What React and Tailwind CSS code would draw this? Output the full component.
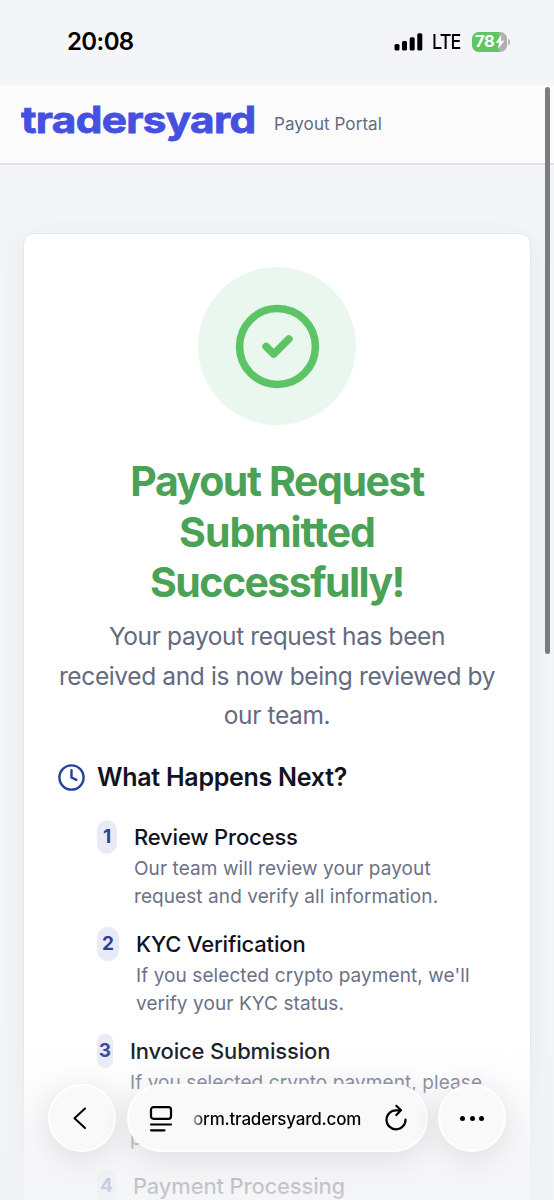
import { CircleCheck, Clock } from "lucide-react";

const steps = [
  {
    id: 1,
    title: "Review Process",
    pill: "w-5",
    lines: ["Our team will review your payout", "request and verify all information."],
  },
  {
    id: 2,
    title: "KYC Verification",
    pill: "w-[22px]",
    lines: ["If you selected crypto payment, we'll", "verify your KYC status."],
  },
  {
    id: 3,
    title: "Invoice Submission",
    pill: "w-4",
    lines: ["If you selected crypto payment, please", "\u00a0", "p"],
  },
  {
    id: 4,
    title: "Payment Processing",
    pill: "w-[19px]",
    lines: [],
  },
];

function StatusBar() {
  return (
    <div className="h-[85px] shrink-0 flex items-start justify-between pl-[67px] pr-[44px] pt-[27px] text-black">
      <span className="text-[24px] leading-[29px] font-semibold tracking-[-0.6px]">20:08</span>
      <div className="flex items-center h-[29px]">
        <svg width="29" height="18" viewBox="0 0 29 18" fill="currentColor">
          <rect x="0.5" y="11" width="5" height="6.5" rx="1.5" />
          <rect x="8" y="8" width="5" height="9.5" rx="1.5" />
          <rect x="15.7" y="4.3" width="5" height="13.2" rx="1.5" />
          <rect x="23.3" y="0.3" width="5" height="17.2" rx="1.5" />
        </svg>
        <span className="ml-[9px] w-[40px] text-[20px] tracking-[-0.9px] font-medium whitespace-nowrap origin-left scale-x-90">LTE</span>
        <div className="relative w-[35px] h-[20px] rounded-[6.5px] overflow-hidden bg-[linear-gradient(90deg,#61c565_78%,#aeb1b0_78%)] flex items-center pl-[3px]">
          <span className="text-[16.5px] font-bold text-white tracking-[-0.3px] leading-none">78</span>
          <svg width="10" height="14" viewBox="0 0 9 13" fill="#fff">
            <path d="M5.8 0 0.4 7.2h3.2L2.6 13 8.6 5.4H5.2z" />
          </svg>
        </div>
        <div className="w-[2px] h-[6px] ml-[1px] rounded-r-full bg-[#b4b6b8]" />
      </div>
    </div>
  );
}

function Header() {
  return (
    <header className="h-[80px] shrink-0 bg-[#fbfbfb] border-b-2 border-[#e1e2e6] flex items-start pl-[21px]">
      <svg width="236" height="60" viewBox="0 0 236 60" className="shrink-0">
        <text x="0" y="48.3" textLength="234.5" lengthAdjust="spacingAndGlyphs" className="text-[37px] font-bold tracking-[-0.6px]" fill="#454fe0" stroke="#454fe0" strokeWidth="0.8">
          tradersyard
        </text>
      </svg>
      <span className="ml-[17px] mt-[27px] text-[17px] leading-6 tracking-[0.08px] text-[#646a7f] whitespace-nowrap">Payout Portal</span>
    </header>
  );
}

function BrowserBar() {
  const glass = "bg-[#f9f9fa] border-2 border-white shadow-[0_6px_30px_rgba(40,45,60,0.12)]";
  return (
    <div className="absolute inset-x-0 bottom-0 h-[116px] flex items-start pl-12 text-black">
      <div className={`w-[68px] h-[68px] rounded-full flex items-center justify-center pr-[4px] ${glass}`}>
        <svg width="14" height="22" viewBox="0 0 14 22" fill="none" stroke="currentColor" strokeWidth="2" strokeLinecap="round" strokeLinejoin="round">
          <path d="M12 1.5 1.5 11.3 12 21" />
        </svg>
      </div>
      <div className={`ml-[11px] w-[301px] h-[68px] rounded-full flex items-center ${glass}`}>
        <svg width="24" height="28" viewBox="0 0 24 28" fill="none" stroke="currentColor" strokeWidth="2.2" strokeLinecap="round" className="ml-5 mt-px shrink-0">
          <rect x="2" y="2.2" width="20" height="11.6" rx="2.5" />
          <path d="M2 19.5h20M2 25.3h13.5" />
        </svg>
        <span className="ml-5 pt-[3px] w-[169px] text-[17px] font-medium tracking-[-0.2px] whitespace-nowrap [mask-image:linear-gradient(90deg,rgba(0,0,0,0.3),#000_12px)]">orm.tradersyard.com</span>
        <svg width="24" height="28" viewBox="0 0 24 28" fill="none" stroke="currentColor" strokeWidth="2.2" strokeLinecap="round" strokeLinejoin="round" className="ml-[22px] shrink-0">
          <path d="M21.5 15.5A9.5 9.5 0 1 1 12 6.3h4.5" />
          <path d="m12.3 1.8 4.7 4.5-4.7 4.7" />
        </svg>
      </div>
      <div className={`ml-[10px] w-[68px] h-[68px] rounded-full flex items-center justify-center gap-[4.5px] ${glass}`}>
        <i className="w-[5px] h-[5px] rounded-full bg-black" />
        <i className="w-[5px] h-[5px] rounded-full bg-black" />
        <i className="w-[5px] h-[5px] rounded-full bg-black" />
      </div>
    </div>
  );
}

export default function App() {
  return (
    <div className="relative w-[554px] h-[1200px] overflow-hidden flex flex-col bg-[#f4f5f8] font-['Inter',sans-serif]">
      <StatusBar />
      <Header />

      <main className="mt-[68px] ml-[23px] w-[508px] h-[1100px] shrink-0 rounded-[11px] border-[1.5px] border-[#dcefe3] bg-white px-[34px] pt-[33px] shadow-[0_8px_28px_rgba(50,60,90,0.08)]">
        <div className="mx-auto w-[158px] h-[158px] rounded-full bg-[#e9f7ef] flex items-center justify-center pl-px pt-px">
          <CircleCheck size={91} strokeWidth={2} color="#5dc466" />
        </div>

        <h1 className="mt-[31px] text-center text-[41px] leading-[50.7px] font-bold text-[#4ba155] whitespace-nowrap">
          <span className="block tracking-[-1.4px]">Payout Request</span>
          <span className="block tracking-[-1.05px]">Submitted</span>
          <span className="block tracking-[-1.55px]">Successfully!</span>
        </h1>
        <p className="mt-[9px] -mx-4 text-center text-[24.5px] leading-[39.5px] tracking-[-0.38px] text-[#646a80] whitespace-nowrap">
          <span className="block">Your payout request has been</span>
          <span className="block">received and is now being reviewed by</span>
          <span className="block">our team.</span>
        </p>

        <div className="mt-[25px] h-[34px] flex items-center">
          <Clock size={29} strokeWidth={2} color="#2441a0" className="-ml-px" />
          <h2 className="ml-[11px] text-[25px] font-semibold tracking-[-0.27px] text-[#11131f] whitespace-nowrap">What Happens Next?</h2>
        </div>

        <ol className="mt-[25px] ml-[39px] flex flex-col gap-[17px]">
          {steps.map((step) => (
            <li key={step.id} className="flex items-start gap-[17px]">
              <span className={`h-[34px] pt-[2px] shrink-0 rounded-full bg-[#e8eaf5] text-[#2c419c] text-[19px] font-bold flex items-center justify-center ${step.pill}`}>
                {step.id}
              </span>
              <div className="whitespace-nowrap">
                <h3 className="mb-px text-[22px] leading-[34px] font-medium tracking-[-0.17px] text-[#11131c]">{step.title}</h3>
                <div className="-mb-px">
                  {step.lines.map((line) => (
                    <p key={line} className="text-[19px] leading-7 tracking-[0.08px] text-[#6b7186]">{line}</p>
                  ))}
                </div>
              </div>
            </li>
          ))}
        </ol>
      </main>

      {/* page scrollbar */}
      <div className="absolute right-[4px] top-[87px] w-[5px] h-[567px] rounded-full bg-[#7b7c7f]" />

      {/* content fades out under the toolbar */}
      <div className="absolute inset-x-0 bottom-0 h-[190px] bg-[linear-gradient(180deg,rgba(242,243,245,0)_0%,rgba(242,243,245,0.06)_22%,rgba(242,243,245,0.3)_42%,rgba(242,243,245,0.62)_72%,rgba(242,243,245,0.78)_90%,rgba(242,243,245,0.82)_100%)]" />
      <BrowserBar />
    </div>
  );
}
